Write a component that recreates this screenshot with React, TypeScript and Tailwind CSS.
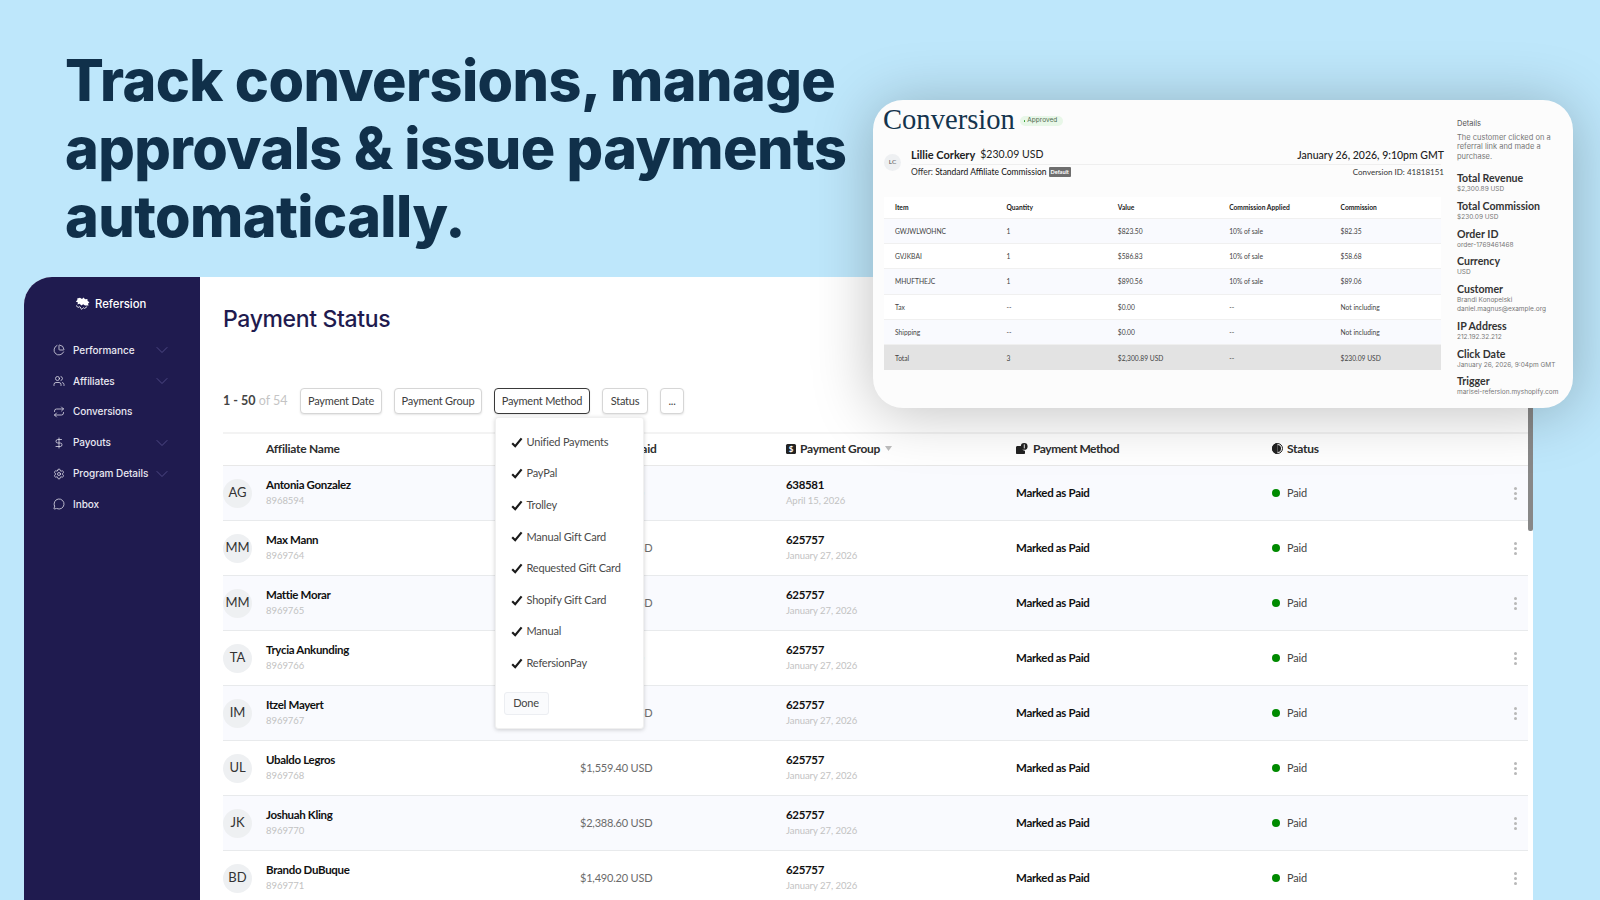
import React from 'react';
import { PieChart, Users, Repeat, DollarSign, Settings, MessageCircle, ChevronDown } from 'lucide-react';

const nav = [
  { label: 'Performance', Icon: PieChart, chev: true },
  { label: 'Affiliates', Icon: Users, chev: true },
  { label: 'Conversions', Icon: Repeat, chev: false },
  { label: 'Payouts', Icon: DollarSign, chev: true },
  { label: 'Program Details', Icon: Settings, chev: true },
  { label: 'Inbox', Icon: MessageCircle, chev: false },
];

const rows = [
  ['AG', 'Antonia Gonzalez', '8968594', '$230.09 USD', '638581', 'April 15, 2026'],
  ['MM', 'Max Mann', '8969764', '$1,230.40 USD', '625757', 'January 27, 2026'],
  ['MM', 'Mattie Morar', '8969765', '$1,874.20 USD', '625757', 'January 27, 2026'],
  ['TA', 'Trycia Ankunding', '8969766', '$912.60 USD', '625757', 'January 27, 2026'],
  ['IM', 'Itzel Mayert', '8969767', '$1,322.80 USD', '625757', 'January 27, 2026'],
  ['UL', 'Ubaldo Legros', '8969768', '$1,559.40 USD', '625757', 'January 27, 2026'],
  ['JK', 'Joshuah Kling', '8969770', '$2,388.60 USD', '625757', 'January 27, 2026'],
  ['BD', 'Brando DuBuque', '8969771', '$1,490.20 USD', '625757', 'January 27, 2026'],
];

const methods = ['Unified Payments', 'PayPal', 'Trolley', 'Manual Gift Card', 'Requested Gift Card', 'Shopify Gift Card', 'Manual', 'RefersionPay'];

const items = [
  ['GWJWLWOHNC', '1', '$823.50', '10% of sale', '$82.35'],
  ['GVJKBAI', '1', '$586.83', '10% of sale', '$58.68'],
  ['MHUFTHEJC', '1', '$890.56', '10% of sale', '$89.06'],
  ['Tax', '--', '$0.00', '--', 'Not including'],
  ['Shipping', '--', '$0.00', '--', 'Not including'],
];

const details: [string, string[]][] = [
  ['Total Revenue', ['$2,300.89 USD']],
  ['Total Commission', ['$230.09 USD']],
  ['Order ID', ['order-1769461468']],
  ['Currency', ['USD']],
  ['Customer', ['Brandi Konopelski', 'daniel.magnus@example.org']],
  ['IP Address', ['212.192.32.212']],
  ['Click Date', ['January 26, 2026, 9:04pm GMT']],
  ['Trigger', ['marisel-refersion.myshopify.com']],
];

const filters = [
  { t: 'Payment Date', c: 'w-[82px] border-[#d6d6d6]' },
  { t: 'Payment Group', c: 'w-[88px] border-[#d6d6d6]' },
  { t: 'Payment Method', c: 'w-[96px] border-[#3a3a3a]' },
  { t: 'Status', c: 'w-[46px] border-[#d6d6d6]' },
  { t: '...', c: 'w-[24px] border-[#d6d6d6]' },
];

const gridCols = 'grid grid-cols-[43px_314px_206px_230px_256px_256px] items-center';
const cardCols = 'grid grid-cols-[111.4px_111.4px_111.4px_111.4px_111.4px] items-center pl-[11px]';

function Logo() {
  return (
    <svg width="15" height="14" viewBox="0 0 15 14" fill="none">
      <path d="M5 .8 7 2l1.6-1.4L10 2.2l2.4-.2.2 2 1.8 1.2-1.4 1.6.6 1.6H10L8.2 7.2 6.4 8.6 4.6 6.8 2.4 7.4 3 5.4.8 4.6 2.4 3 2.2 1.4z" fill="#ffffff" />
      <path d="M1.4 8.6c.8.2.8 1.8 1.8 1.8s.8-.8 1.6-.8.8 2.6 1.8 2.6 1-1.4 1.8-1.4.9 1 1.7.6.6-1.6 1.6-1.6" stroke="#ffffff" strokeWidth="0.9" strokeLinecap="round" />
    </svg>
  );
}

function WalletIcon() {
  return (
    <svg width="12" height="11" viewBox="0 0 12 11">
      <path d="M0 4.5C0 3.7.6 3 1.4 3H6v1.5c0 2 1.2 3 3 3.2V10c0 .6-.4 1-1 1H1c-.6 0-1-.4-1-1z" fill="#222" />
      <circle cx="8.2" cy="3.4" r="3.4" fill="#222" />
      <rect x="7.8" y="1.4" width="0.9" height="4" fill="#fff" />
    </svg>
  );
}

function HalfIcon() {
  return (
    <svg width="11" height="11" viewBox="0 0 11 11">
      <circle cx="5.5" cy="5.5" r="5" fill="#fff" stroke="#222" strokeWidth="1" />
      <path d="M5.5 0a5.5 5.5 0 0 0 0 11z" fill="#222" />
      <path d="M5.5 2a3.5 3.5 0 0 1 0 7z" fill="#222" />
    </svg>
  );
}

function CheckMark() {
  return (
    <svg width="12" height="11" viewBox="0 0 12 11" fill="none" className="mr-[4px] shrink-0">
      <path d="M1.2 6.2 4.2 9.2 10.6 1.4" stroke="#1a1a1a" strokeWidth="2.2" />
    </svg>
  );
}

function ConversionCard() {
  return (
    <div className="absolute left-[873px] top-[100px] w-[700px] h-[308px] rounded-[30px] bg-[#fcfcfc] shadow-[0_4px_60px_rgba(0,0,0,0.25)] flex pl-[11px] overflow-hidden font-[Lato]">
      <div className="w-[557px] flex flex-col">
        <div className="h-[41px] flex items-center">
          <span className="font-['Liberation_Serif'] text-[28.6px] leading-none text-[#14344d] -ml-[1px]">Conversion</span>
          <span className="ml-[5px] mt-[1px] h-[10px] w-[43px] rounded-full bg-[#e8f7e8] flex items-center pl-[4px] gap-[2px] text-[6.5px] text-[#4d6b4d] font-[Inter]">
            <span className="w-[1.5px] h-[1.5px] rounded-full bg-[#2e9e2e]" />Approved
          </span>
        </div>
        <div className="flex mt-[7.5px]">
          <div className="w-[17px] h-[17px] mt-[5px] rounded-full bg-[#eef0f2] flex items-center justify-center text-[6.5px] text-[#555] shrink-0">LC</div>
          <div className="ml-[10px] flex-1 flex flex-col">
            <div className="flex justify-between items-center h-[16px] border-b border-[#efefef] text-[11px] pb-[1px]">
              <div className="flex gap-[5px] text-[#222]"><b className="font-bold">Lillie Corkery</b><span className="text-[10.5px]">$230.09 USD</span></div>
              <span className="text-[#222] text-[10.5px] font-medium mr-[-3px]">January 26, 2026, 9:10pm GMT</span>
            </div>
            <div className="flex justify-between items-center h-[15px] text-[8.5px] text-[#333]">
              <div className="flex items-center">Offer:&nbsp;<span className="text-[#111]">Standard Affiliate Commission</span>
                <span className="ml-[2px] bg-[#6e6e6e] text-white text-[5.5px] font-bold px-[2px] py-[0.5px] rounded-[1px]">Default</span>
              </div>
              <span className="mr-[-3px] text-[8px]">Conversion ID: 41818151</span>
            </div>
          </div>
        </div>
        <div className="mt-[17.5px] w-[557px] text-[6.7px] text-[#444]">
          <div className={`${cardCols} h-[22px] bg-white border-b border-[#f0f0f0] text-[#222] font-bold`}>
            {['Item', 'Quantity', 'Value', 'Commission Applied', 'Commission'].map((h) => <span key={h}>{h}</span>)}
          </div>
          {items.map((r, i) => (
            <div key={r[0]} className={`${cardCols} h-[25.2px] border-b border-[#f0f0f0] ${i % 2 === 0 ? 'bg-[#f9fafe]' : 'bg-white'}`}>
              {r.map((c, j) => <span key={j}>{c}</span>)}
            </div>
          ))}
          <div className={`${cardCols} h-[25.2px] bg-[#e3e3e3]`}>
            {['Total', '3', '$2,300.89 USD', '--', '$230.09 USD'].map((c, j) => <span key={j}>{c}</span>)}
          </div>
        </div>
      </div>
      <div className="absolute left-[584px] top-[19px] w-[112px]">
        <div className="font-[Inter] text-[7.5px] leading-[10px] text-[#555]">Details</div>
        <div className="font-[Inter] text-[7.5px] leading-[9.4px] text-[#777] mt-[4px]">The customer clicked on a<br />referral link and made a<br />purchase.</div>
        <div className="mt-[10px] flex flex-col gap-[4.5px]">
          {details.map(([k, v]) => (
            <div key={k}>
              <div className="text-[10.6px] leading-[14px] font-bold text-[#333]">{k}</div>
              {v.map((l) => <div key={l} className="font-[Inter] text-[6.5px] leading-[9.2px] text-[#777] whitespace-nowrap">{l}</div>)}
            </div>
          ))}
        </div>
      </div>
    </div>
  );
}

export default function App() {
  return (
    <div className="relative w-[1600px] h-[900px] overflow-hidden bg-[#bee7fb]">
      <div className="h-[277px] pl-[65px] pt-[46px]">
        <h1 className="font-[Inter] font-extrabold text-[57.5px] leading-[68px] tracking-[-0.6px] text-[#10304a]">
          Track conversions, manage<br />approvals &amp; issue payments<br />automatically.
        </h1>
      </div>

      <div className="relative ml-[24px] w-[1509px] h-[623px] flex rounded-tl-[28px] overflow-hidden bg-white">
        <aside className="w-[176px] shrink-0 bg-[#1f1b4f] text-[#e9e8f2] font-[Inter]">
          <div className="h-[52px] pt-[2px] pl-[51px] flex items-center gap-[5px] text-[11.3px] font-medium text-white">
            <Logo />Refersion
          </div>
          <nav className="mt-[6px] flex flex-col">
            {nav.map(({ label, Icon, chev }) => (
              <div key={label} className="h-[30.8px] pl-[29px] pr-[28px] flex items-center text-[10px] font-medium tracking-[-0.05px]">
                <Icon size={12} strokeWidth={1.5} className="shrink-0" />
                <span className="ml-[8px] flex-1 whitespace-nowrap">{label}</span>
                {chev && <ChevronDown size={20} strokeWidth={1} className="text-[#57528f] shrink-0" />}
              </div>
            ))}
          </nav>
        </aside>

        <main className="flex-1 pl-[23px] pr-[5px] font-[Lato] relative">
          <h2 className="font-[Inter] font-medium text-[23px] leading-[30px] pt-[27px] text-[#1f1b4f] tracking-[-0.35px] h-[57px]">Payment Status</h2>
          <div className="mt-[54px] h-[26px] flex items-center">
            <div className="w-[77px] text-[12.5px] text-[#c4c4c4] whitespace-nowrap"><b className="text-[#444] font-bold">1 - 50</b> of 54</div>
            <div className="flex gap-[12px]">
              {filters.map((f) => (
                <div key={f.t} className={`h-[26px] flex items-center justify-center rounded-[4px] border bg-white text-[11px] tracking-[-0.2px] text-[#3d3d3d] shadow-[0_1px_2px_rgba(0,0,0,0.1)] ${f.c}`}>{f.t}</div>
              ))}
            </div>
          </div>
          <div className="mt-[18px] border-t-2 border-[#f3f3f3]">
            <div className={`${gridCols} h-[32px] pb-[2px] border-b border-[#e8e8e8] text-[12px] tracking-[-0.25px] font-bold text-[#2e2e2e]`}>
              <span />
              <span>Affiliate Name</span>
              <span className="pl-[10px]">Amount Paid</span>
              <span className="flex items-center gap-[4px]">
                <span className="w-[10px] h-[10px] rounded-[1.5px] bg-[#222] text-white text-[8px] leading-none flex items-center justify-center">$</span>
                Payment Group
                <svg width="7" height="5" viewBox="0 0 7 5" className="ml-[1px]"><path d="M0 0h7L3.5 5z" fill="#bdbdbd" /></svg>
              </span>
              <span className="flex items-center gap-[5px] tracking-[-0.45px]"><WalletIcon />Payment Method</span>
              <span className="flex items-center gap-[4px]"><HalfIcon />Status</span>
            </div>
            {rows.map((r, i) => (
              <div key={i} className={`${gridCols} h-[55px] border-b border-[#e8eaec] ${i % 2 === 0 ? 'bg-[#f9fafe]' : 'bg-white'}`}>
                <div className="w-[29px] h-[29px] rounded-full bg-[#eef0f2] flex items-center justify-center text-[13px] text-[#333]">{r[0]}</div>
                <div className="flex flex-col">
                  <span className="text-[11.5px] tracking-[-0.33px] leading-[16px] font-bold text-[#111] -mt-[0.5px]">{r[1]}</span>
                  <span className="text-[9.5px] leading-[14px] tracking-[-0.05px] mt-[1px] text-[#c2c2c2]">{r[2]}</span>
                </div>
                <span className="text-[11px] tracking-[-0.2px] text-[#6b6b6b]">{r[3]}</span>
                <div className="flex flex-col">
                  <span className="text-[11.5px] tracking-[-0.33px] leading-[16px] font-bold text-[#111] -mt-[0.5px]">{r[4]}</span>
                  <span className="text-[9.5px] leading-[14px] tracking-[-0.05px] mt-[1px] text-[#c2c2c2]">{r[5]}</span>
                </div>
                <span className="text-[11.5px] tracking-[-0.33px] font-bold text-[#111]">Marked as Paid</span>
                <div className="flex items-center justify-between pr-[11px]">
                  <div className="flex items-center text-[11px] tracking-[-0.2px] text-[#444]">
                    <span className="w-[8px] h-[8px] rounded-full bg-[#008a00] mr-[7px]" />Paid
                  </div>
                  <div className="flex flex-col gap-[2px]">
                    <span className="w-[3px] h-[3px] rounded-full bg-[#b8b8b8]" />
                    <span className="w-[3px] h-[3px] rounded-full bg-[#b8b8b8]" />
                    <span className="w-[3px] h-[3px] rounded-full bg-[#b8b8b8]" />
                  </div>
                </div>
              </div>
            ))}
          </div>

          <div className="absolute right-0 top-0 w-[5px] h-[254px] bg-[#888888] rounded-b-[2px]" />

          <div className="absolute left-[294.5px] top-[140px] w-[149px] h-[312px] bg-white rounded-[3px] border border-[#f0f0f0] shadow-[0_1px_4px_rgba(0,0,0,0.18)] pt-[8.3px]">
            {methods.map((m) => (
              <div key={m} className="h-[31.6px] flex items-center pl-[15px] text-[11px] tracking-[-0.2px] text-[#4a4a4a]">
                <CheckMark />{m}
              </div>
            ))}
            <div className="mt-[12.5px] ml-[8px] w-[45px] h-[23px] rounded-[3px] border border-[#eceef2] bg-[#fafbfd] flex items-center justify-center text-[11px] tracking-[-0.2px] text-[#444]">Done</div>
          </div>
        </main>
      </div>

      <ConversionCard />
    </div>
  );
}
